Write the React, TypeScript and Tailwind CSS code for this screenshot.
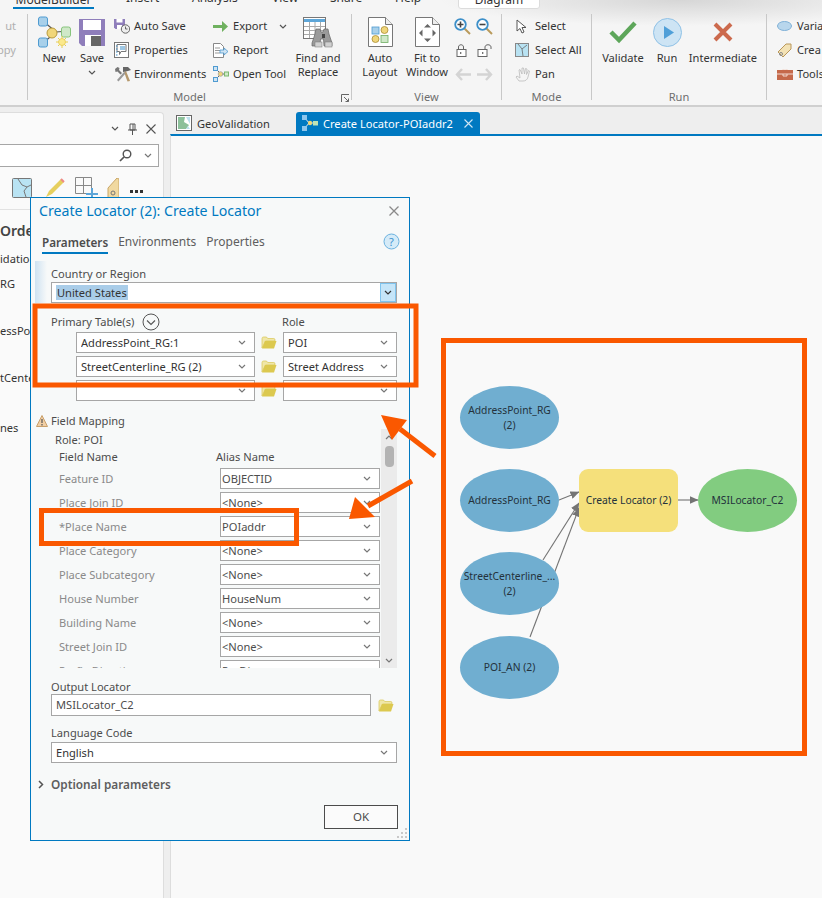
import React from "react";

const Chev = ({ c = "#555", w = 8 }: { c?: string; w?: number }) => (
  <svg width={w} height={5} viewBox="0 0 8 5" className="shrink-0"><path d="M1 1l3 3 3-3" fill="none" stroke={c} strokeWidth="1.2" /></svg>
);

const Folder = () => (
  <svg width="16" height="13" viewBox="0 0 16 13" className="shrink-0">
    <path d="M1 12V2.500C1 1.700 1.500 1 2.500 1h3l1.200 1.500h6c.8 0 1.300.5 1.300 1.300V5H4.500L1 12z" fill="#f0e7a8" stroke="#d9c652" strokeWidth=".7" />
    <path d="M1 12.500L4 5h11.500L13 12.500z" fill="#dcc94f" />
  </svg>
);

const Sel = ({ text, className = "", dark }: { text?: string; className?: string; dark?: boolean }) => (
  <div className={`flex h-[21px] items-center justify-between border border-[#a6a6a6] bg-white pr-[8px] ${className}`}>
    <span className={`truncate text-[11.1px] leading-[14px] ${dark ? "text-[#333]" : "text-[#4c4c4c]"}`}>{text}</span>
    <Chev c="#777" />
  </div>
);

const Big = ({ w, icon, lines, chev }: { w: number; icon: React.ReactNode; lines: string[]; chev?: boolean }) => (
  <div className="flex shrink-0 flex-col items-center" style={{ width: w }}>
    <div className="flex h-[36px] items-center justify-center">{icon}</div>
    <div className="mt-[1px] text-center text-[11.1px] leading-[13.500px] text-[#333]">
      {lines.map((l) => (
        <div key={l} className="whitespace-nowrap">{l}</div>
      ))}
    </div>
    {chev && <div className="mt-[5px]"><Chev c="#555" /></div>}
  </div>
);

const Small = ({ icon, text, w }: { icon: React.ReactNode; text: string; w: number }) => (
  <div className="flex h-[24px] items-center" style={{ width: w }}>
    <div className="flex w-[20px] shrink-0 items-center justify-start">{icon}</div>
    <span className="whitespace-nowrap text-[11.1px] leading-[14px] text-[#333]">{text}</span>
  </div>
);

const Group = ({ w, label, children, launcher }: { w: number; label?: string; children: React.ReactNode; launcher?: boolean }) => (
  <div className="relative h-[86px] shrink-0 border-r border-[#c8c8c8]" style={{ width: w }}>
    <div className="flex h-[76px]">{children}</div>
    <div className="text-center text-[11.1px] leading-[14px] text-[#6e6e6e]">{label}</div>
    {launcher && (
      <svg width="9" height="9" viewBox="0 0 9 9" className="absolute bottom-[-3px] right-[1px]">
        <path d="M.5 8V.5H8M3 3l4.500 4.500M7.500 4.500v3h-3" fill="none" stroke="#666" />
      </svg>
    )}
  </div>
);

const NewIcon = () => (
  <svg width="33" height="33" viewBox="0 0 33 33">
    <path d="M5 5l13 11M5 27l13-11M18 16l13-1" stroke="#555" strokeWidth="1.2" />
    <rect x=".5" y="1" width="9" height="9" rx="2" fill="#a8d0ea" stroke="#4f9bd1" />
    <rect x=".5" y="22" width="9" height="9" rx="2" fill="#a8d0ea" stroke="#4f9bd1" />
    <rect x="23.500" y="11" width="9" height="10" rx="2" fill="#cfe8c8" stroke="#87c47c" />
    <circle cx="14" cy="17" r="5" fill="#f0d67a" stroke="#b99a3a" />
    <g stroke="#e8cf4f" strokeWidth="1"><path d="M24 20v12M18 26h12M20 22l8 8M28 22l-8 8" /></g>
    <circle cx="24" cy="26" r="3.500" fill="#fbe98c" stroke="#e5c94a" strokeWidth=".7" />
  </svg>
);
const SaveIcon = () => (
  <svg width="26" height="27" viewBox="0 0 26 27">
    <path d="M0 0h26v27H3l-3-3z" fill="#8f7ebb" />
    <rect x="4" y="1" width="18" height="10" fill="#fff" />
    <rect x="6" y="16" width="16" height="11" fill="#fff" />
    <rect x="12" y="17" width="10" height="10" fill="#666" />
  </svg>
);
const AutoSaveIcon = () => (
  <svg width="16" height="16" viewBox="0 0 16 16">
    <path d="M0 1h11v10H1.500L0 9.500z" fill="#8f7ebb" />
    <rect x="2.500" y="1" width="6" height="3.500" fill="#fff" />
    <rect x="3" y="7" width="5" height="4" fill="#fff" />
    <circle cx="11.500" cy="11" r="4.200" fill="#eee" stroke="#666" />
    <path d="M11.500 8.500V11h2" fill="none" stroke="#666" />
  </svg>
);
const PropsIcon = () => (
  <svg width="15" height="16" viewBox="0 0 15 16">
    <rect x=".5" y=".5" width="14" height="15" fill="#fff" stroke="#777" />
    <path d="M3 2.500h9v7H7l-1.500 3v-3H3z" fill="none" stroke="#777" />
    <path d="M2 4h1.500M2 7h1.500M2 10h1.500M2 13h1.500" stroke="#3c8fc9" />
    <path d="M6 5h5M6 7h5" stroke="#3c8fc9" />
  </svg>
);
const ToolsIcon = () => (
  <svg width="18" height="16" viewBox="0 0 18 16">
    <path d="M12 5l4 10-2.500.5L10 6z" fill="#b5986d" />
    <path d="M9 1h5l3 3-3 1-5 1z" fill="#666" />
    <path d="M3 14L10 6l1.500 1.500L4.500 15.500z" fill="#999" />
    <path d="M1 3l2.500-2 2 1-.5 2 3 3-1.500 1.500-3-3-2 .5z" fill="#777" />
  </svg>
);
const ExportIcon = () => (
  <svg width="16" height="13" viewBox="0 0 16 13"><path d="M0 5h9V1l6 5.500L9 12V8H0z" fill="#6fb15f" /></svg>
);
const ReportIcon = () => (
  <svg width="16" height="15" viewBox="0 0 16 15">
    <path d="M.5.500h7l3 3v11h-10z" fill="#fff" stroke="#888" />
    <path d="M2 5h5M2 7.500h5M2 10h5" stroke="#999" />
    <path d="M7 7h4V5l4 3.500-4 3.500v-2H7z" fill="#cfe3f2" stroke="#4f9bd1" strokeWidth=".8" />
  </svg>
);
const OpenToolIcon = () => (
  <svg width="16" height="16" viewBox="0 0 16 16">
    <path d="M3 3l5 5-5 5M8 8h4" stroke="#666" fill="none" />
    <rect x=".5" y=".5" width="4" height="4" fill="#cfe3f2" stroke="#4f9bd1" />
    <rect x=".5" y="11.500" width="4" height="4" fill="#cfe3f2" stroke="#4f9bd1" />
    <circle cx="7.500" cy="8" r="2.300" fill="#f0d67a" stroke="#999" strokeWidth=".7" />
    <rect x="11.500" y="6" width="4" height="4" fill="#cfe8c8" stroke="#7ab86e" />
  </svg>
);
const FindIcon = () => (
  <svg width="31" height="31" viewBox="0 0 31 31">
    <rect x=".5" y=".5" width="22" height="21" fill="#fff" stroke="#777" />
    <rect x="1" y="2" width="21" height="3" fill="#5ea6d8" />
    <path d="M1 9.500h21M1 13.500h21M1 17.500h21M6.500 5v16M12 5v16M17.500 5v16" stroke="#aaa" />
    <path d="M13 12h4l1 3h2l1-3h4l1 5 3 9v3h-8l-.5-7h-3l-.5 7h-8v-3l3-9z" fill="#9a9a9a" stroke="#666" strokeWidth=".7" />
    <rect x="12" y="25" width="7" height="5" fill="#d0d0d0" stroke="#777" strokeWidth=".5" />
    <rect x="22" y="25" width="7" height="5" fill="#d0d0d0" stroke="#777" strokeWidth=".5" />
    <rect x="19" y="17" width="3" height="4" fill="#444" />
  </svg>
);
const DocIcon = ({ kind }: { kind: "auto" | "fit" }) => (
  <svg width="25" height="30" viewBox="0 0 25 30">
    <path d="M.5.500h17l7 7v22H.5z" fill="#fff" stroke="#777" />
    <path d="M17.500.500v7h7" fill="#eee" stroke="#777" />
    {kind === "auto" ? (
      <>
        <rect x="4" y="10" width="7" height="7" fill="#a8d0ea" stroke="#4f9bd1" strokeWidth=".8" />
        <circle cx="16.500" cy="13" r="3.500" fill="#f0d67a" stroke="#a98c33" strokeWidth=".8" />
        <circle cx="7.500" cy="22" r="3.500" fill="#f0d67a" stroke="#a98c33" strokeWidth=".8" />
        <rect x="13" y="18.500" width="7" height="7" fill="#cfe8c8" stroke="#6fad63" strokeWidth=".8" />
      </>
    ) : (
      <path d="M12.500 7l3.500 3.500H9zM12.500 25L9 21.500h7zM4 16l3.500-3.500v7zM21 16l-3.500-3.500v7z" fill="#666" />
    )}
  </svg>
);
const Zoom = ({ plus }: { plus?: boolean }) => (
  <svg width="17" height="17" viewBox="0 0 17 17">
    <path d="M10 10l6 6" stroke="#b99a5b" strokeWidth="2" />
    <circle cx="6.500" cy="6.500" r="5.300" fill="#fff" stroke="#3c8fc9" strokeWidth="1.800" />
    <path d={plus ? "M3.500 6.500h6M6.500 3.500v6" : "M3.500 6.500h6"} stroke="#444" strokeWidth="1.600" />
  </svg>
);
const Lock = ({ open }: { open?: boolean }) => (
  <svg width="15" height="13" viewBox="0 0 15 13">
    <rect x={open ? 1 : 2} y="5.500" width="9" height="7" fill="#fff" stroke="#666" />
    <path d="M4.500 9.500v1M5 8l2 1-2 1z" fill="#444" />
    <path d={open ? "M8 5V3c0-3 6-3 6 0v2" : "M3.500 5V3c0-3 5-3 5 0v2"} fill="none" stroke="#666" />
  </svg>
);
const NavArrow = ({ left }: { left?: boolean }) => (
  <svg width="16" height="13" viewBox="0 0 16 13" className={left ? "" : "rotate-180"}>
    <path d="M7 1L2 6.500 7 12M2 6.500h14" fill="none" stroke="#d4d4d4" strokeWidth="2.400" />
  </svg>
);
const CursorIcon = () => (
  <svg width="11" height="15" viewBox="0 0 11 15" className="ml-[1px]"><path d="M1 1v11l3-2.500 2 4.500 2-1-2-4.500h4z" fill="#fff" stroke="#555" /></svg>
);
const SelAllIcon = () => (
  <svg width="14" height="14" viewBox="0 0 14 14">
    <rect x=".5" y=".5" width="13" height="13" fill="#b8e2f2" stroke="#888" />
    <path d="M3 1l4 5 5-4M7 6l1 7" fill="none" stroke="#666" strokeWidth=".8" />
  </svg>
);
const HandIcon = () => (
  <svg width="16" height="16" viewBox="0 0 16 16" fill="none" stroke="#bbb" strokeWidth=".8">
    <path d="M4 15L1 11l1-1 3 2L4 4l1-.5L7 8 7 2l1.500 0L9.500 8 10.500 2.500l1.500.5L11.500 8.500 13.500 4.500l1 .5L13 11c-.5 3-3 4-5 4z" />
  </svg>
);
const CheckIcon = () => (
  <svg width="28" height="24" viewBox="0 0 28 24"><path d="M2 12l8 8L26 3" fill="none" stroke="#5da65a" strokeWidth="4.500" /></svg>
);
const RunIcon = () => (
  <svg width="29" height="29" viewBox="0 0 29 29">
    <circle cx="14.500" cy="14.500" r="14" fill="#cde4f4" stroke="#8fc1e6" />
    <path d="M11 8l10 6.500L11 21z" fill="#4f9fd8" />
  </svg>
);
const XIcon = () => (
  <svg width="20" height="20" viewBox="0 0 20 20"><path d="M2 2l16 16M18 2L2 18" stroke="#cc6a4d" strokeWidth="4" /></svg>
);
const ModelIcon = () => (
  <svg width="16" height="16" viewBox="0 0 16 16">
    <path d="M3 3l4 5-4 5M7 8h5" stroke="#cde4f4" fill="none" />
    <rect x="0" y="0" width="5" height="5" fill="#8ec6ec" /><rect x="0" y="11" width="5" height="5" fill="#8ec6ec" />
    <circle cx="8" cy="8" r="2.200" fill="#f0d67a" /><rect x="11" y="6" width="5" height="4.500" fill="#bfe3b5" />
  </svg>
);
const MapIcon = () => (
  <svg width="16" height="16" viewBox="0 0 16 16">
    <rect x=".5" y=".5" width="15" height="15" fill="#fff" stroke="#666" />
    <path d="M2 2h7l-1 5 5 3-3 4H2z" fill="#8cc09a" />
    <path d="M10 2h4v7zM12 11l2 3h-4z" fill="#bde0ee" />
  </svg>
);

const fieldRows: [string, string][] = [
  ["Feature ID", "OBJECTID"],
  ["Place Join ID", "<None>"],
  ["*Place Name", "POIaddr"],
  ["Place Category", "<None>"],
  ["Place Subcategory", "<None>"],
  ["House Number", "HouseNum"],
  ["Building Name", "<None>"],
  ["Street Join ID", "<None>"],
  ["Prefix Direction", "PreDir"],
];

const Node = ({ lines, className }: { lines: string[]; className: string }) => (
  <div className={`absolute flex h-[63px] w-[99px] flex-col items-center justify-center text-[10.3px] leading-[15px] text-[#24323c] ${className}`}>
    {lines.map((l) => (
      <div key={l} className="whitespace-nowrap">{l}</div>
    ))}
  </div>
);

export default function App() {
  return (
    <div className="relative flex h-[898px] w-[822px] flex-col overflow-hidden bg-[#f8f8f8] font-['Noto_Sans',sans-serif]">
      {/* ribbon */}
      <div className="h-[107px] shrink-0 border-b-2 border-[#cfcfcf] bg-[radial-gradient(ellipse_240px_26px_at_680px_0px,#d6d6d6,#f5f5f5)]">
        <div className="flex h-[9px] items-start overflow-hidden pl-[13px] text-[12px] leading-[14px] text-[#333]">
          <div className="-mt-[7px] h-[16px] w-[81px] border-b-2 border-[#0079c1] text-center"><div className="h-[14px] overflow-hidden">ModelBuilder</div></div>
          <div className="-mt-[9px] ml-[32px] w-[66px]">Insert</div>
          <div className="-mt-[9px] w-[80px]">Analysis</div>
          <div className="-mt-[9px] w-[58px]">View</div>
          <div className="-mt-[9px] w-[65px]">Share</div>
          <div className="-mt-[9px] w-[63px]">Help</div>
          <div className="-mt-[8px] h-[17px] w-[82px] rounded-b-[3px] border border-[#dcdcdc] bg-white text-center">Diagram</div>
        </div>
        <div className="mt-[5px] flex">
          <Group w={28}>
            <div className="flex w-full flex-col items-end pr-[11px] text-[11.1px] leading-[24px] text-[#b0b0b0]">
              <div>ut</div>
              <div>ppy</div>
            </div>
          </Group>
          <Group w={324} label="Model" launcher>
            <div className="ml-[1px]"><Big w={50} icon={<NewIcon />} lines={["New"]} /></div>
            <Big w={26} icon={<SaveIcon />} lines={["Save"]} chev />
            <div className="ml-[9px] flex flex-col">
              <Small w={99} icon={<AutoSaveIcon />} text="Auto Save" />
              <Small w={99} icon={<PropsIcon />} text="Properties" />
              <Small w={99} icon={<ToolsIcon />} text="Environments" />
            </div>
            <div className="flex flex-col">
              <div className="flex items-center">
                <Small w={66} icon={<ExportIcon />} text="Export" />
                <Chev c="#555" />
              </div>
              <Small w={80} icon={<ReportIcon />} text="Report" />
              <Small w={80} icon={<OpenToolIcon />} text="Open Tool" />
            </div>
            <Big w={50} icon={<FindIcon />} lines={["Find and", "Replace"]} />
          </Group>
          <Group w={150} label="View">
            <div className="ml-[4px]"><Big w={48} icon={<DocIcon kind="auto" />} lines={["Auto", "Layout"]} /></div>
            <Big w={46} icon={<DocIcon kind="fit" />} lines={["Fit to", "Window"]} />
            <div className="ml-[4px] grid grid-cols-2 content-start gap-x-[5px]">
              <div className="flex h-[24px] items-center justify-center"><Zoom plus /></div>
              <div className="flex h-[24px] items-center justify-center"><Zoom /></div>
              <div className="flex h-[24px] items-center justify-center"><Lock /></div>
              <div className="flex h-[24px] items-center justify-center"><Lock open /></div>
              <div className="flex h-[24px] items-center justify-center"><NavArrow left /></div>
              <div className="flex h-[24px] items-center justify-center"><NavArrow /></div>
            </div>
          </Group>
          <Group w={90} label="Mode">
            <div className="ml-[13px] flex flex-col">
              <Small w={76} icon={<CursorIcon />} text="Select" />
              <Small w={76} icon={<SelAllIcon />} text="Select All" />
              <Small w={76} icon={<HandIcon />} text="Pan" />
            </div>
          </Group>
          <Group w={175} label="Run">
            <div className="ml-[8px]"><Big w={46} icon={<CheckIcon />} lines={["Validate"]} /></div>
            <Big w={42} icon={<RunIcon />} lines={["Run"]} />
            <Big w={70} icon={<XIcon />} lines={["Intermediate"]} />
          </Group>
          <div className="ml-[10px] flex flex-col">
            <Small w={44} icon={<svg width="15" height="10" viewBox="0 0 15 10"><ellipse cx="7.500" cy="5" rx="7" ry="4.500" fill="#b8d6ec" stroke="#7fb0d6" /></svg>} text="Varia" />
            <Small w={44} icon={<svg width="15" height="15" viewBox="0 0 15 15"><path d="M1 9l8-8h5v5l-8 8z" fill="#f3e2b5" stroke="#b9975b" /><circle cx="4" cy="11" r="1.500" fill="none" stroke="#888" /></svg>} text="Crea" />
            <Small w={44} icon={<svg width="16" height="11" viewBox="0 0 16 11"><rect y="1" width="16" height="10" fill="#c5694a" /><path d="M0 5h16M6 5v2h4V5M6 1V0h4v1" stroke="#f1d9cf" fill="none" /></svg>} text="Tools" />
          </div>
        </div>
      </div>

      {/* body */}
      <div className="flex min-h-0 flex-1 bg-[#eeeeee]">
        <div className="w-[170px] shrink-0 pr-[6px] pt-[5px]">
          <div className="h-full overflow-hidden rounded-tr-[4px] border-r border-t border-[#dddddd] bg-[#fafafa]">
            <div className="flex h-[31px] items-center justify-end gap-[9px] pr-[7px]">
              <Chev c="#555" w={8} />
              <svg width="9" height="12" viewBox="0 0 9 12"><path d="M2 1h5v6H2zM0 7h9M4.500 7v5M5 1v6" fill="none" stroke="#555" /></svg>
              <svg width="10" height="10" viewBox="0 0 10 10"><path d="M.5.500l9 9M9.500.500l-9 9" stroke="#555" strokeWidth="1.100" /></svg>
            </div>
            <div className="-ml-[2px] flex h-[23px] w-[161px] items-center justify-end gap-[12px] border border-[#a6a6a6] bg-white pr-[6px]">
              <svg width="13" height="13" viewBox="0 0 13 13"><circle cx="8" cy="5" r="3.800" fill="none" stroke="#555" strokeWidth="1.400" /><path d="M5 8l-4 4" stroke="#555" strokeWidth="1.700" /></svg>
              <Chev c="#777" />
            </div>
            <div className="flex h-[42px] items-center pl-[12px]">
              <svg width="20" height="20" viewBox="0 0 20 20"><rect x=".5" y=".5" width="19" height="19" rx="1" fill="#b9e3f3" stroke="#777" /><path d="M6 1l4 6 5 2-3 4 2 6M15 9l4-2" fill="none" stroke="#777" /></svg>
              <svg width="20" height="20" viewBox="0 0 20 20" className="ml-[13px]"><path d="M1 19l3-6L16 1l3 3L7 16z" fill="#e6cf5e" /><path d="M16 1l3 3" stroke="#e88" strokeWidth="2" /></svg>
              <svg width="24" height="22" viewBox="0 0 24 22" className="ml-[10px]"><path d="M.5.500h16v16H.5zM8.500.500v16M.5 8.500h16" fill="none" stroke="#888" /><path d="M11 17h12M17 11v10" stroke="#5ea6d8" strokeWidth="2" /></svg>
              <svg width="12" height="20" viewBox="0 0 12 20" className="ml-[8px]"><path d="M1 20V10L10 0l2 1v19z" fill="#f1d9a0" stroke="#c9a667" /><circle cx="6" cy="15" r="2" fill="none" stroke="#777" /></svg>
              <div className="ml-[11px] mt-[6px] flex gap-[2px]">
                <div className="h-[3px] w-[3px] bg-[#333]" />
                <div className="h-[3px] w-[3px] bg-[#333]" />
                <div className="h-[3px] w-[3px] bg-[#333]" />
              </div>
            </div>
          </div>
        </div>
        <div className="flex min-w-0 flex-1 flex-col">
          <div className="flex h-[27px] shrink-0 items-end pl-[2px] pt-[5px] text-[11.1px] leading-[14px]">
            <div className="flex h-[22px] w-[124px] items-center gap-[5px] pl-[4px] text-[#333]">
              <MapIcon />
              <span className="pt-[1px]">GeoValidation</span>
            </div>
            <div className="flex h-[22px] w-[184px] items-center rounded-t-[3px] bg-[#0079c1] pl-[6px] pr-[7px] text-white">
              <ModelIcon />
              <span className="ml-[5px] flex-1 whitespace-nowrap pt-[1px]">Create Locator-POIaddr2</span>
              <svg width="9" height="9" viewBox="0 0 9 9"><path d="M.5.500l8 8M8.500.500l-8 8" stroke="#cfe6f5" strokeWidth="1.100" /></svg>
            </div>
          </div>
          <div className="relative flex-1 border-l border-t-2 border-[#dddddd] border-t-[#0079c1] bg-[#f9f9f9]">
            <svg className="absolute left-[-1px] top-[-2px]" width="652" height="764" viewBox="170 134 652 764">
              <defs>
                <marker id="ah" markerWidth="9" markerHeight="8" refX="8.500" refY="4" orient="auto" markerUnits="userSpaceOnUse">
                  <path d="M0 0l9 4-9 4z" fill="#747474" />
                </marker>
              </defs>
              <g stroke="#747474" strokeWidth="1.100" fill="none">
                <path d="M559 500L579 492" markerEnd="url(#ah)" />
                <path d="M543 560L579 503" markerEnd="url(#ah)" />
                <path d="M530 637L579 508" markerEnd="url(#ah)" />
                <path d="M678 500L698 500" markerEnd="url(#ah)" />
              </g>
            </svg>
            <Node lines={["AddressPoint_RG", "(2)"]} className="left-[289px] top-[250px] rounded-[50%] bg-[#70aed0]" />
            <Node lines={["AddressPoint_RG"]} className="left-[289px] top-[333px] rounded-[50%] bg-[#70aed0]" />
            <Node lines={["StreetCenterline_...", "(2)"]} className="left-[289px] top-[416px] rounded-[50%] bg-[#70aed0]" />
            <Node lines={["POI_AN (2)"]} className="left-[289px] top-[500px] rounded-[50%] bg-[#70aed0]" />
            <Node lines={["Create Locator (2)"]} className="left-[408px] top-[333px] rounded-[9px] bg-[#f5e07b]" />
            <Node lines={["MSILocator_C2"]} className="left-[527px] top-[333px] rounded-[50%] bg-[#82cc80]" />
          </div>
        </div>
      </div>

      {/* text of the catalog pane showing left of the dialog */}
      <div className="absolute left-0 top-[209px] h-[689px] w-[30px] overflow-hidden border-t border-[#e2e2e2] text-[11.1px] text-[#333]">
        <div className="mt-[13px] whitespace-nowrap text-[14px] font-semibold leading-[16px] text-[#444]">Orde</div>
        <div className="mt-[13px] whitespace-nowrap leading-[14px]">idation</div>
        <div className="mt-[11px] whitespace-nowrap leading-[14px]">RG</div>
        <div className="mt-[33px] whitespace-nowrap leading-[14px]">essPoi</div>
        <div className="mt-[33px] whitespace-nowrap leading-[14px]">tCente</div>
        <div className="mt-[36px] whitespace-nowrap leading-[14px]">nes</div>
      </div>

      {/* floating dialog */}
      <div className="absolute left-[30px] top-[197px] flex h-[644px] w-[380px] flex-col border border-[#0079c1] bg-[#f7f9f9]">
        <div className="flex h-[26px] shrink-0 items-center justify-between pl-[8px] pr-[10px]">
          <span className="text-[14.150px] leading-[18px] text-[#0079c1]">Create Locator (2): Create Locator</span>
          <svg width="10" height="10" viewBox="0 0 10 10"><path d="M.5.500l9 9M9.500.500l-9 9" stroke="#8a8a8a" strokeWidth="1.300" /></svg>
        </div>
        <div className="mt-[9px] flex h-[21px] shrink-0 items-start pl-[11px] pr-[9px] text-[12px] leading-[18px] text-[#5e5e5e]">
          <div className="h-[21px] border-b-2 border-[#0079c1] text-[11.700px] font-semibold text-[#4c4c4c]">Parameters</div>
          <div className="ml-[10px]">Environments</div>
          <div className="ml-[10px] flex-1">Properties</div>
          <svg width="17" height="17" viewBox="0 0 17 17"><circle cx="8.500" cy="8.500" r="7.500" fill="#d5ebf8" stroke="#6bb2df" /><text x="8.500" y="12.500" textAnchor="middle" fontSize="11" fill="#3c92cf">?</text></svg>
        </div>

        <div className="ml-[4px] mt-[7px] shrink-0 bg-[linear-gradient(to_right,#cfe2f1,#f7f9f9)] bg-[length:12px_100%] bg-no-repeat pl-[16px] pt-[6px]">
          <div className="text-[11.1px] leading-[14px] text-[#4c4c4c]">Country or Region</div>
          <div className="mt-[1px] flex h-[21px] w-[346px] items-stretch border border-[#a6a6a6] bg-white">
            <div className="flex flex-1 items-center pl-[4px]"><span className="bg-[#a9cde9] px-[1px] text-[11.1px] leading-[15px] text-[#333]">United States</span></div>
            <div className="flex w-[16px] items-center justify-center border border-[#7fc4ee] bg-[#c5e5f8]"><Chev c="#333" /></div>
          </div>
        </div>

        <div className="ml-[20px] mt-[11px] flex h-[15px] w-[346px] shrink-0 items-center text-[11.1px] leading-[14px] text-[#4c4c4c]">
          <div className="flex w-[231px] items-center">
            <span>Primary Table(s)</span>
            <svg width="18" height="18" viewBox="0 0 18 18" className="ml-[8px] shrink-0"><circle cx="9" cy="9" r="8" fill="none" stroke="#555" /><path d="M5 7.500l4 4 4-4" fill="none" stroke="#555" strokeWidth="1.100" /></svg>
          </div>
          <span>Role</span>
        </div>
        <div className="ml-[45px] mt-[3px] flex shrink-0 flex-col gap-[3px]">
          {[
            ["AddressPoint_RG:1", "POI"],
            ["StreetCenterline_RG (2)", "Street Address"],
            ["", ""],
          ].map(([a, b], i) => (
            <div key={i} className="flex items-center">
              <Sel text={a} dark className="w-[179px] pl-[4px]" />
              <div className="flex w-[28px] justify-center"><Folder /></div>
              <Sel text={b} dark className="w-[114px] pl-[4px]" />
            </div>
          ))}
        </div>

        <div className="ml-[5px] mt-[12px] flex h-[15px] shrink-0 items-center gap-[3px] text-[11.1px] leading-[14px] text-[#4c4c4c]">
          <svg width="12" height="12" viewBox="0 0 12 12"><path d="M6 .5l5.500 11H.5z" fill="#f1cfa5" stroke="#c9a06b" /><path d="M6 4v4M6 9v1.500" stroke="#555" strokeWidth="1.200" /></svg>
          <span>Field Mapping</span>
        </div>

        <div className="mt-[1px] flex h-[239px] shrink-0">
          <div className="h-full w-[350px] overflow-hidden">
            <div className="ml-[24px] mt-[4px] text-[11.1px] leading-[14px] text-[#4c4c4c]">Role: POI</div>
            <div className="ml-[28px] mt-[3px] flex text-[11.1px] leading-[14px] text-[#4c4c4c]">
              <span className="w-[157px]">Field Name</span>
              <span>Alias Name</span>
            </div>
            <div className="mt-[4px] flex flex-col gap-[3px]">
              {fieldRows.map(([l, v]) => (
                <div key={l} className="flex h-[21px] items-center pl-[28px]">
                  <span className="w-[161px] text-[11.1px] leading-[14px] text-[#8a8a8a]">{l}</span>
                  <Sel text={v} className="w-[160px] pl-[1px]" />
                </div>
              ))}
            </div>
          </div>
          <div className="flex h-full w-[16px] flex-col items-center bg-[#ebebeb]">
            <div className="mt-[6px] rotate-180"><Chev c="#777" /></div>
            <div className="mt-[6px] h-[21px] w-[9px] rounded-[4px] bg-[#b3b3b3]" />
            <div className="mb-[5px] mt-auto"><Chev c="#777" /></div>
          </div>
        </div>

        <div className="ml-[20px] mt-[12px] shrink-0 text-[11.1px] leading-[14px] text-[#4c4c4c]">Output Locator</div>
        <div className="ml-[20px] flex shrink-0 items-center">
          <div className="flex h-[22px] w-[320px] items-center border border-[#a6a6a6] bg-white pl-[4px] text-[11.1px] leading-[14px] text-[#4c4c4c]">MSILocator_C2</div>
          <div className="ml-[7px]"><Folder /></div>
        </div>
        <div className="ml-[20px] mt-[10px] shrink-0 text-[11.1px] leading-[14px] text-[#4c4c4c]">Language Code</div>
        <div className="ml-[20px] mt-[2px] shrink-0"><Sel text="English" dark className="w-[346px] pl-[4px]" /></div>
        <div className="ml-[7px] mt-[14px] flex h-[14px] shrink-0 items-center gap-[7px]">
          <svg width="6" height="9" viewBox="0 0 6 9"><path d="M1 1l3.500 3.500L1 8" fill="none" stroke="#555" strokeWidth="1.500" /></svg>
          <span className="text-[11.800px] font-semibold leading-[14px] text-[#5e5e5e]">Optional parameters</span>
        </div>
        <div className="mr-[11px] mt-[14px] flex h-[24px] w-[74px] shrink-0 items-center justify-center self-end border border-[#4c4c4c] bg-[#fbfbfb] text-[11.5px] text-[#4c4c4c]">OK</div>
        <svg width="11" height="11" viewBox="0 0 11 11" className="absolute bottom-[1px] right-[1px]" fill="#c9c9c9">
          <rect x="8" y="0" width="2" height="2" /><rect x="4" y="4" width="2" height="2" /><rect x="8" y="4" width="2" height="2" /><rect x="0" y="8" width="2" height="2" /><rect x="4" y="8" width="2" height="2" /><rect x="8" y="8" width="2" height="2" />
        </svg>
      </div>

      {/* hand-drawn annotations */}
      <svg className="pointer-events-none absolute inset-0" width="822" height="898" viewBox="0 0 822 898">
        <g fill="none" stroke="#fa5800" strokeWidth="5">
          <rect x="35" y="306" width="381" height="79" />
          <rect x="41.500" y="510.500" width="255" height="33" />
          <rect x="443.500" y="340.500" width="361" height="413" />
          <path d="M435 456L400 429" />
          <path d="M412 481L368 506" />
        </g>
        <path d="M381 415L407 420L392 440z" fill="#fa5800" />
        <path d="M349 519L375 517L355 497z" fill="#fa5800" />
      </svg>
    </div>
  );
}
